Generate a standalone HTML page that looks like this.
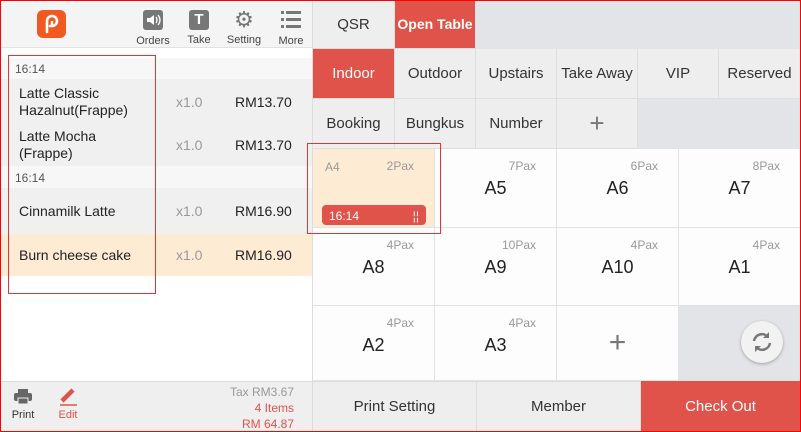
<!DOCTYPE html>
<html><head><style>
*{box-sizing:border-box;margin:0;padding:0}
body{width:801px;height:432px;overflow:hidden;font-family:"Liberation Sans",sans-serif;background:#fff;position:relative}
.a{position:absolute}
.c{display:flex;align-items:center;justify-content:center}
.tab{position:absolute;height:50px;display:flex;align-items:center;justify-content:center;font-size:15px;color:#333;background:#eeeeee;border-right:1px solid #dedede;border-bottom:1px solid #dedede}
.red{background:#e0534a;color:#fff}
.cell{position:absolute;background:#fdfdfd;border-right:1px solid #e2e2e2;border-bottom:1px solid #e2e2e2}
.cell .n{position:absolute;left:0;right:0;top:29px;text-align:center;font-size:18px;color:#222}
.cell .p{position:absolute;right:20px;top:10px;font-size:12px;color:#999}
.row{position:absolute;left:0;width:313px;background:#f0f0f0;font-size:14px;color:#222}
.row .q{position:absolute;left:176px;color:#999}
.row .pr{position:absolute;left:235px;color:#222}
.ic{position:absolute;top:8px;text-align:center;font-size:11px;color:#444}
</style></head><body>
<div class="a" style="left:0;top:0;width:313px;height:48px;background:#f4f4f4;border-bottom:1px solid #e2e2e2"></div>
<div class="a c" style="left:37px;top:10px;width:29px;height:28px;background:#f05a22;border-radius:6px">
<svg width="18" height="20" viewBox="0 0 18 20"><path d="M4 18V7a5 5 0 1 1 5 5H7" fill="none" stroke="#fff" stroke-width="2.6" stroke-linecap="round"/><path d="M9 7v5" stroke="#fff" stroke-width="2.4"/></svg></div>
<div class="ic" style="left:136px;width:34px"><svg width="20" height="20" viewBox="0 0 20 20" style="margin-top:2px"><rect width="20" height="20" rx="3" fill="#777"/><path d="M4 8h3l4-3v10l-4-3H4z" fill="#fff"/><path d="M13 7q2 3 0 6M15 5q4 5 0 10" fill="none" stroke="#fff" stroke-width="1.3"/></svg><div style="margin-top:2px">Orders</div></div>
<div class="ic" style="left:184px;width:30px"><div style="margin:2px auto 0;width:20px;height:20px;background:#777;border-radius:3px;color:#fff;font-size:15px;font-weight:bold;line-height:20px">T</div><div style="margin-top:4px">Take</div></div>
<div class="ic" style="left:225px;width:38px"><div style="margin:0 auto;font-size:22px;color:#777;line-height:24px">⚙</div><div style="margin-top:2px">Setting</div></div>
<div class="ic" style="left:276px;width:30px"><svg width="20" height="20" viewBox="0 0 20 20" style="margin-top:2px"><g fill="#777"><rect x="0" y="1" width="3" height="3"/><rect x="5" y="1" width="15" height="3"/><rect x="0" y="8" width="3" height="3"/><rect x="5" y="8" width="15" height="3"/><rect x="0" y="15" width="3" height="3"/><rect x="5" y="15" width="15" height="3"/></g></svg><div style="margin-top:2px">More</div></div>
<div class="a" style="left:0;top:58px;width:313px;height:21px;background:#f7f7f7;font-size:12px;color:#555;padding:4px 15px">16:14</div>
<div class="row" style="top:79px;height:47px"><div class="a" style="left:19px;top:6px;line-height:17px">Latte Classic<br>Hazalnut(Frappe)</div><div class="q" style="top:15px">x1.0</div><div class="pr" style="top:15px">RM13.70</div></div>
<div class="row" style="top:126px;height:40px"><div class="a" style="left:19px;top:2px;line-height:17px">Latte Mocha<br>(Frappe)</div><div class="q" style="top:11px">x1.0</div><div class="pr" style="top:11px">RM13.70</div></div>
<div class="a" style="left:0;top:166px;width:313px;height:22px;background:#f7f7f7;font-size:12px;color:#555;padding:5px 15px">16:14</div>
<div class="row" style="top:188px;height:46px"><div class="a" style="left:19px;top:15px">Cinnamilk Latte</div><div class="q" style="top:15px">x1.0</div><div class="pr" style="top:15px">RM16.90</div></div>
<div class="row" style="top:234px;height:42px;background:#fdebd4"><div class="a" style="left:19px;top:13px">Burn cheese cake</div><div class="q" style="top:13px">x1.0</div><div class="pr" style="top:13px">RM16.90</div></div>
<div class="a" style="left:0;top:381px;width:313px;height:51px;background:#efefef;border-top:1px solid #ddd"></div>
<div class="a" style="left:10px;top:388px;width:26px;text-align:center;font-size:11px;color:#333"><svg width="20" height="18" viewBox="0 0 20 18"><rect x="5" y="1" width="10" height="4" fill="#666"/><rect x="1" y="5" width="18" height="8" rx="2" fill="#666"/><rect x="5" y="10" width="10" height="6" fill="#666" stroke="#efefef" stroke-width="1"/></svg><div>Print</div></div>
<div class="a" style="left:55px;top:388px;width:26px;text-align:center;font-size:11px;color:#e0534a"><svg width="22" height="18" viewBox="0 0 22 18"><path d="M5 13L16 2" stroke="#e0534a" stroke-width="4.5"/><path d="M3 17h17" stroke="#e0534a" stroke-width="1.5"/></svg><div>Edit</div></div>
<div class="a" style="right:507px;top:384px;text-align:right;font-size:12px;line-height:16px;color:#999">Tax RM3.67<br><span style="color:#e0534a">4 Items<br>RM 64.87</span></div>
<div class="a" style="left:312px;top:0;width:1px;height:432px;background:#ddd"></div>
<div class="a" style="left:313px;top:0;width:488px;height:150px;background:#e3e4e7"></div>
<div class="tab" style="left:313px;top:0;width:82px;height:49px">QSR</div>
<div class="tab red" style="left:395px;top:0;width:81px;height:49px;font-weight:bold;font-size:14px">Open Table</div>
<div class="tab red" style="left:313px;top:49px;width:82px">Indoor</div>
<div class="tab" style="left:395px;top:49px;width:81px">Outdoor</div>
<div class="tab" style="left:476px;top:49px;width:81px">Upstairs</div>
<div class="tab" style="left:557px;top:49px;width:81px">Take Away</div>
<div class="tab" style="left:638px;top:49px;width:81px">VIP</div>
<div class="tab" style="left:719px;top:49px;width:82px">Reserved</div>
<div class="tab" style="left:313px;top:99px;width:82px">Booking</div>
<div class="tab" style="left:395px;top:99px;width:81px">Bungkus</div>
<div class="tab" style="left:476px;top:99px;width:81px">Number</div>
<div class="tab" style="left:557px;top:99px;width:81px;font-size:26px;color:#777">+</div>
<div class="cell" style="left:313px;top:149px;width:122px;height:79px;background:#fdebd4"><div class="a" style="left:12px;top:11px;font-size:12px;color:#999">A4</div><div class="p" style="right:20px">2Pax</div><div class="a" style="left:9px;top:56px;width:104px;height:20px;background:#e0534a;border-radius:4px;color:#fff;font-size:12px;padding:4px 7px">16:14<span style="float:right">¦¦</span></div></div>
<div class="cell" style="left:435px;top:149px;width:122px;height:79px"><div class="p">7Pax</div><div class="n">A5</div></div>
<div class="cell" style="left:557px;top:149px;width:122px;height:79px"><div class="p">6Pax</div><div class="n">A6</div></div>
<div class="cell" style="left:679px;top:149px;width:122px;height:79px"><div class="p">8Pax</div><div class="n">A7</div></div>
<div class="cell" style="left:313px;top:228px;width:122px;height:78px"><div class="p">4Pax</div><div class="n">A8</div></div>
<div class="cell" style="left:435px;top:228px;width:122px;height:78px"><div class="p">10Pax</div><div class="n">A9</div></div>
<div class="cell" style="left:557px;top:228px;width:122px;height:78px"><div class="p">4Pax</div><div class="n">A10</div></div>
<div class="cell" style="left:679px;top:228px;width:122px;height:78px"><div class="p">4Pax</div><div class="n">A1</div></div>
<div class="cell" style="left:313px;top:306px;width:122px;height:75px"><div class="p">4Pax</div><div class="n">A2</div></div>
<div class="cell" style="left:435px;top:306px;width:122px;height:75px"><div class="p">4Pax</div><div class="n">A3</div></div>
<div class="cell c" style="left:557px;top:306px;width:122px;height:75px;font-size:30px;color:#777">+</div>
<div class="cell" style="left:679px;top:306px;width:122px;height:75px;background:#e3e4e7"></div>
<div class="a c" style="left:741px;top:321px;width:42px;height:42px;border-radius:50%;background:#f2f2f2;box-shadow:0 1px 3px rgba(0,0,0,.3)"><svg width="24" height="24" viewBox="0 0 24 24"><path d="M4 11a8 8 0 0 1 14-4M20 13a8 8 0 0 1-14 4" fill="none" stroke="#777" stroke-width="2.5"/><path d="M19 2v6h-6zM5 22v-6h6z" fill="#777"/></svg></div>
<div class="tab" style="left:313px;top:381px;width:164px;height:51px;border-top:1px solid #ddd">Print Setting</div>
<div class="tab" style="left:477px;top:381px;width:164px;height:51px;border-top:1px solid #ddd">Member</div>
<div class="tab red" style="left:641px;top:381px;width:160px;height:51px">Check Out</div>
<div class="a" style="left:8px;top:55px;width:148px;height:239px;border:1.5px solid #e0343a"></div>
<div class="a" style="left:307px;top:143px;width:134px;height:91px;border:1.5px solid #e0343a"></div>
<div class="a" style="left:0;top:0;width:801px;height:432px;border:1px solid #f00"></div>
</body></html>
